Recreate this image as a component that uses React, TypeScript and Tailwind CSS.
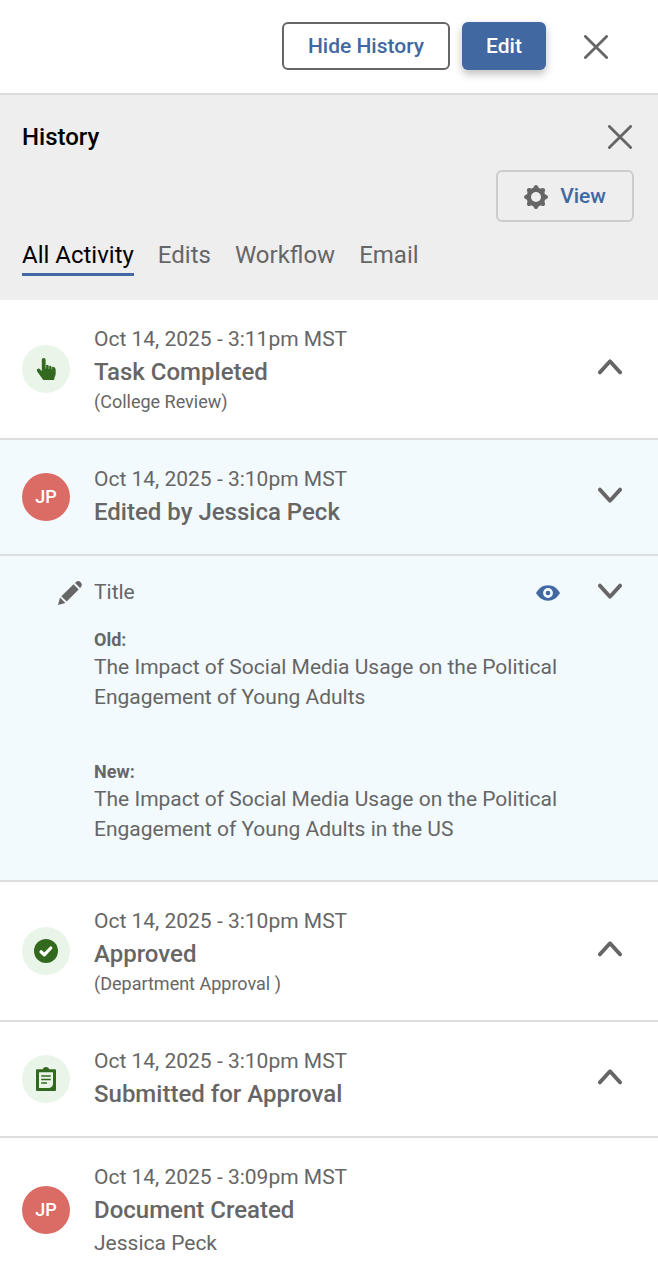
import { useState } from 'react'
import type { ReactNode } from 'react'

const CloseIcon = () => (
  <svg className="w-6 h-6 block" viewBox="0 0 24 24" fill="none" stroke="#666666" strokeWidth="2.8" strokeLinecap="round">
    <path d="M1.4 1.4L22.6 22.6M22.6 1.4L1.4 22.6" />
  </svg>
)

const Chevron = ({ up }: { up?: boolean }) => (
  <svg className="w-6 h-4 block" viewBox="0 0 24 16" fill="none" stroke="#666666" strokeWidth="3.8" strokeLinecap="round" strokeLinejoin="round">
    <path d={up ? 'M1.9 13.4L12 2.3L22.1 13.4' : 'M1.9 2.6L12 13.7L22.1 2.6'} />
  </svg>
)

const GearIcon = () => (
  <svg className="w-6 h-6 block" viewBox="0 0 24 24">
    <circle cx="12" cy="12" r="7.2" fill="none" stroke="#666666" strokeWidth="4.4" />
    {[0, 45, 90, 135, 180, 225, 270, 315].map((a) => (
      <path key={a} transform={`rotate(${a} 12 12)`} fill="#666666" d="M8.6 4.2L9.9 1.6Q10.5 0 12 0T14.1 1.6L15.4 4.2Z" />
    ))}
  </svg>
)

const PencilIcon = () => (
  <svg className="w-6 h-6 block" viewBox="0 0 24 24" fill="#666666">
    <path d="M0 24L2 16.6L7.4 22Z" />
    <path d="M3.3 15.2L15.6 3.3L20.7 8.4L8.7 20.6Z" />
    <path d="M17 2L18 1Q20.4 -1 22.6 1.2T23 6L22 7Z" />
  </svg>
)

const EyeIcon = () => (
  <svg className="w-6 h-4 block" viewBox="0 0 24 16">
    <path fill="#4168a0" d="M0 8C3 3 7 0.3 12 0.3S21 3 24 8C21 13 17 15.7 12 15.7S3 13 0 8Z" />
    <circle cx="12" cy="8" r="3.6" fill="#4168a0" stroke="#f2fafe" strokeWidth="2.6" />
  </svg>
)

const HandIcon = () => (
  <svg className="w-6 h-6 block" viewBox="0 0 24 24" fill="#33691e">
    <path d="M7.8 2.8A1.9 1.9 0 0 1 11.6 2.8V8.2Q13.6 7.2 14.8 9Q16.6 8.3 17.6 10Q19 9.3 20.4 10.3Q21.8 11.3 21.7 13.2V16.5Q21.6 18.6 20.4 20.5V22Q20.4 23 19.4 23H9.8Q8.8 23 8.6 22L3.2 14.4Q2 12.6 3.8 11.7Q5.2 11.2 6.3 12.6L7.8 14.3Z" />
    <path d="M11.8 8V11.5M14.9 9V12M17.8 10V12.4" stroke="#eaf5e9" strokeWidth="0.5" />
  </svg>
)

const CheckIcon = () => (
  <svg className="w-6 h-6 block" viewBox="0 0 24 24" fill="none">
    <circle cx="12" cy="12" r="12" fill="#33691e" />
    <path d="M7 12.8L10.3 15.8L16.8 9" stroke="#ffffff" strokeWidth="3.2" strokeLinecap="round" strokeLinejoin="round" />
  </svg>
)

const ClipboardIcon = () => (
  <svg className="w-6 h-6 block" viewBox="0 0 24 24">
    <path fill="#33691e" d="M2 3.2Q2 2.2 3 2.2H8.8Q9.2 0 12 0T15.2 2.2H21Q22 2.2 22 3.2V23Q22 24 21 24H3Q2 24 2 23Z" />
    <path fill="#eaf5e9" d="M5 5.2H19V17Q18.6 20.6 15 21H5Z" />
    <path d="M7.2 9H16.8M7.2 12.5H16.8M7.2 16H13" stroke="#33691e" strokeWidth="1.5" />
  </svg>
)

const Avatar = ({ initials }: { initials: string }) => (
  <div className="w-12 h-12 rounded-full bg-[#db6c65] text-white text-lg font-medium flex items-center justify-center">
    {initials}
  </div>
)

const StatusBadge = ({ children }: { children: ReactNode }) => (
  <div className="w-12 h-12 rounded-full bg-[#eaf5e9] flex items-center justify-center">{children}</div>
)

interface EntryProps {
  icon: ReactNode
  date: string
  title: string
  note?: string
  person?: string
  open?: boolean
  chevron?: boolean
}

const Entry = ({ icon, date, title, note, person, open, chevron = true }: EntryProps) => (
  <div className={`flex items-center py-6 pl-[22px] pr-9 border-b-2 border-[#dddddd] ${open ? 'bg-[#f2fafe]' : 'bg-white'}`}>
    {icon}
    <div className="flex-1 ml-6">
      <div className="text-[21px] leading-[30px]">{date}</div>
      <div className="text-2xl leading-9 font-medium">{title}</div>
      {note && <div className="text-lg leading-6">{note}</div>}
      {person && <div className="text-[21px] leading-[30px]">{person}</div>}
    </div>
    {chevron && (
      <button className="mb-1">
        <Chevron up={!open} />
      </button>
    )}
  </div>
)

const TABS = ['All Activity', 'Edits', 'Workflow', 'Email']

export default function App() {
  const [tab, setTab] = useState('All Activity')

  return (
    <div className="h-[1280px] overflow-hidden bg-white text-[#666666] font-['Roboto',sans-serif]">
      {/* Top actions */}
      <div className="h-[95px] flex items-start justify-end pt-[22px] pr-[50px] border-b-2 border-[#dddddd]">
        <button className="w-[168px] h-12 pt-0.5 border-2 border-[#666666] rounded-md text-[#4168a0] text-[21px] font-medium">Hide History</button>
        <button className="w-[84px] h-12 pt-0.5 ml-3 rounded-md bg-[#4168a0] text-white text-[21px] font-medium shadow-[0_4px_8px_rgba(0,0,0,0.25)]">Edit</button>
        <button className="ml-[38px] mt-[13px]"><CloseIcon /></button>
      </div>

      {/* History header */}
      <div className="h-[205px] bg-[#eeeeee] pl-[22px] pr-6 pt-6">
        <div className="flex items-center justify-between h-9">
          <h2 className="text-2xl font-medium text-black">History</h2>
          <button className="mr-0.5"><CloseIcon /></button>
        </div>
        <div className="flex justify-end mt-[15px]">
          <button className="w-[138px] h-[52px] pt-0.5 flex items-center justify-center gap-3 border-2 border-[#cccccc] rounded-md text-[#4168a0] text-[21px] font-medium">
            <GearIcon />
            View
          </button>
        </div>
        <div className="flex gap-6 mt-[15px]">
          {TABS.map((t) => (
            <button
              key={t}
              onClick={() => setTab(t)}
              className={`h-[39px] text-2xl leading-9 border-b-3 ${t === tab ? 'text-black border-[#4168a0]' : 'border-transparent'}`}
            >
              {t}
            </button>
          ))}
        </div>
      </div>

      <Entry icon={<StatusBadge><HandIcon /></StatusBadge>} date="Oct 14, 2025 - 3:11pm MST" title="Task Completed" note="(College Review)" />
      <Entry icon={<Avatar initials="JP" />} date="Oct 14, 2025 - 3:10pm MST" title="Edited by Jessica Peck" open />

      {/* Field changes */}
      <div className="h-[326px] pt-[21px] bg-[#f2fafe] border-b-2 border-[#dddddd]">
        <div className="flex items-center h-[30px] pl-[58px] pr-9 text-[21px]">
          <div className="pt-0.5"><PencilIcon /></div>
          <span className="flex-1 ml-3 pt-0.5">Title</span>
          <button className="mr-[38px] mt-0.5"><EyeIcon /></button>
          <button className="mb-0.5"><Chevron /></button>
        </div>
        <div className="pl-[94px] pr-20 mt-[21px]">
          <div className="text-lg leading-6 font-bold">Old:</div>
          <p className="text-[21px] leading-[30px]">The Impact of Social Media Usage on the Political Engagement of Young Adults</p>
          <div className="mt-12 text-lg leading-6 font-bold">New:</div>
          <p className="text-[21px] leading-[30px]">The Impact of Social Media Usage on the Political Engagement of Young Adults in the US</p>
        </div>
      </div>

      <Entry icon={<StatusBadge><CheckIcon /></StatusBadge>} date="Oct 14, 2025 - 3:10pm MST" title="Approved" note="(Department Approval )" />
      <Entry icon={<StatusBadge><ClipboardIcon /></StatusBadge>} date="Oct 14, 2025 - 3:10pm MST" title="Submitted for Approval" />
      <Entry icon={<Avatar initials="JP" />} date="Oct 14, 2025 - 3:09pm MST" title="Document Created" person="Jessica Peck" chevron={false} />
    </div>
  )
}
